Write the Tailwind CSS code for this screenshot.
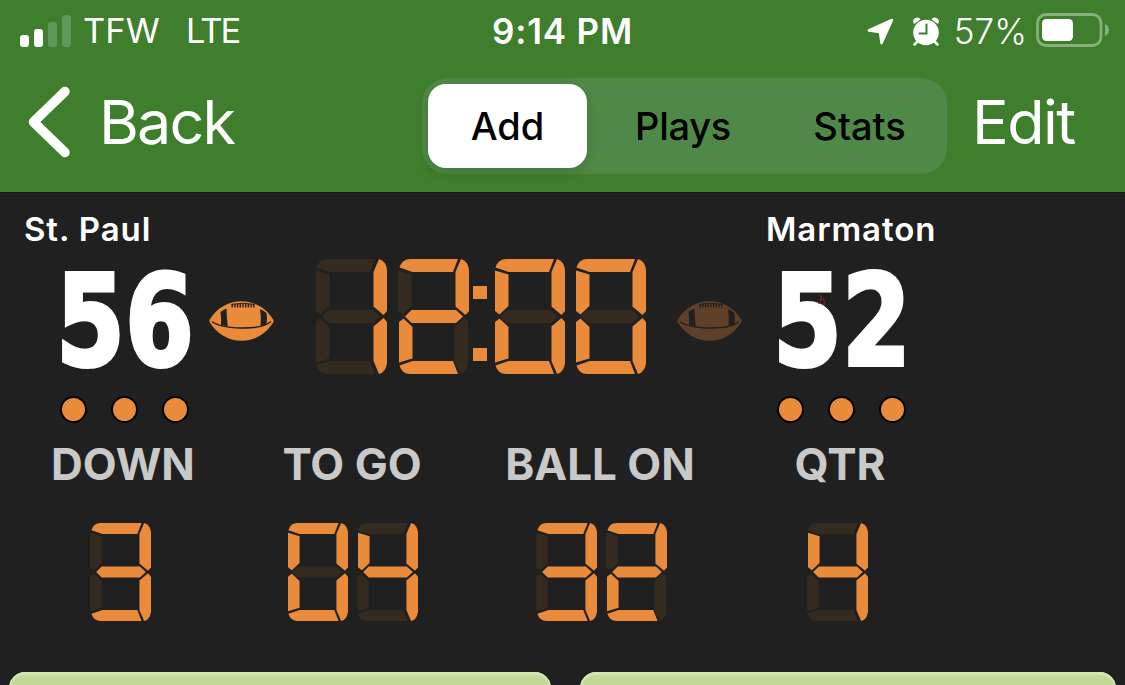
<!DOCTYPE html>
<html lang="en">
<head>
    <meta charset="UTF-8">
    <meta name="viewport" content="width=device-width, initial-scale=1.0">
    <title>Scoreboard</title>
    <script src="https://cdn.jsdelivr.net/npm/@tailwindcss/browser@4"></script>
</head>
<body class="bg-[#202020] h-[685px] overflow-hidden font-['Inter',sans-serif] text-white whitespace-nowrap">

    <!-- Shared shapes -->
    <svg class="hidden">
        <symbol id="football" viewBox="0 0 64 40">
            <path d="M.3 18.500C8 6 20 .3 32 .3s24 5.700 31.700 18.200q.6 1.500 0 3C57 32 46 39.800 32 39.800S7 32 .3 21.500q-.6-1.500 0-3z" fill="#e98b3a"/>
            <path d="M11 11Q13.500 8.800 17 7.500Q17 16 18.300 25.300L11.500 24Q12 17 11 11z" fill="#202020"/>
            <path d="M57 12Q54 9.500 50.500 8Q52 16 51 25.300L57 23.700Q58 17 57 12z" fill="#202020"/>
            <path d="M2.500 20.500Q10 26.500 32 27T61.500 20.500" fill="none" stroke="#202020" stroke-width="1.400"/>
            <path d="M22 3.300Q33 1.300 45 3.300" fill="none" stroke="#202020" stroke-width="1"/>
            <path d="M22 4.800H45" fill="none" stroke="#202020" stroke-width="3.600" stroke-dasharray="1.400 1.300"/>
        </symbol>
    </svg>

    <header class="h-[193px] bg-[#3e7e2c] border-b border-[#171717]">
        <!-- Status bar -->
        <div class="flex h-[62px] items-center pl-5 pr-[15px] text-[35px] leading-none">
            <div class="flex flex-1 items-center">
                <div class="flex h-8 w-[51px] items-end gap-[5px]">
                    <span class="h-3 w-[9px] rounded-[3px] bg-white"></span>
                    <span class="h-[18px] w-[9px] rounded-[3px] bg-white"></span>
                    <span class="h-[25px] w-[9px] rounded-[3px] bg-[#60985a]"></span>
                    <span class="h-8 w-[9px] rounded-[3px] bg-[#60985a]"></span>
                </div>
                <span class="ml-3 w-[103px] text-[34.500px]">TFW</span>
                <span class="text-[34.500px] tracking-[-2px]">LTE</span>
            </div>
            <div class="mr-[5px] text-[35px] font-semibold tracking-[0.800px]">9:14 PM</div>
            <div class="flex flex-1 items-center justify-end">
                <svg class="mr-[18px] h-[27px] w-[27px]" viewBox="0 0 27 27" fill="#fff" stroke="#fff" stroke-width="2.500" stroke-linejoin="round"><path d="M25 2L1.800 12.500l11.200 1.500 1.500 11.200z"/></svg>
                <svg class="mr-[14px] h-[29px] w-[28px]" viewBox="0 0 28 29">
                    <path d="M2 7Q-.5 2 4 .8 7-.5 8.500 2.500zM26 7Q28.500 2 24 .8 21-.5 19.500 2.500z" fill="#fff"/>
                    <path d="M6 24l-3.500 3.500M22 24l3.500 3.500" stroke="#fff" stroke-width="2.500" stroke-linecap="round"/>
                    <circle cx="14" cy="15.500" r="12.800" fill="#fff"/>
                    <path d="M14.500 7.500V16.500H7.500" fill="none" stroke="#3e7e2c" stroke-width="2" stroke-linecap="round"/>
                </svg>
                <span class="text-[35px] font-[350]">57%</span>
                <svg class="ml-[9px] mb-0.5 h-[34px] w-[74px]" viewBox="0 0 74 34">
                    <rect x="1.500" y="1.500" width="63.500" height="31" rx="8.500" fill="none" stroke="#86b17c" stroke-width="2.800"/>
                    <rect x="6" y="6" width="31" height="22" rx="4.500" fill="#fff"/>
                    <path d="M69 11q4 1.500 4 6t-4 6z" fill="#86b17c"/>
                </svg>
            </div>
        </div>

        <!-- Navigation bar -->
        <nav class="flex h-[130px] items-center pb-0.5 pl-7">
            <svg class="mb-[9px] h-[72px] w-[43px]" viewBox="0 0 43 72"><path d="M37 5.500L5.500 36l31.500 30.500" fill="none" stroke="#fff" stroke-width="9.500" stroke-linecap="round" stroke-linejoin="round"/></svg>
            <a class="mb-[7px] ml-[28px] w-[323px] text-[61px] leading-none tracking-[-1.800px]">Back</a>
            <div class="flex h-24 w-[525px] shrink-0 rounded-[26px] bg-[#508947] p-1.5 text-[38px] font-medium text-black">
                <div class="flex w-[159px] shrink-0 items-center justify-center rounded-[18px] bg-white shadow-[0_4px_12px_rgba(0,0,0,0.15)]">Add</div>
                <div class="my-4 flex w-[185px] shrink-0 items-center justify-center border-r border-[#4b8745] pl-2 tracking-[-0.300px]">Plays</div>
                <div class="flex flex-1 items-center justify-center pl-1.5">Stats</div>
            </div>
            <a class="mb-[7px] ml-[25px] text-[61px] leading-none tracking-[-1.500px]">Edit</a>
        </nav>
    </header>

    <main>
        <!-- Team names -->
        <div class="flex h-[66px] items-center pl-6 pt-[7px] text-[33px] font-semibold leading-none tracking-[0.900px]">
            <div class="w-[742px]">St. Paul</div>
            <div>Marmaton</div>
        </div>

        <!-- Score, possession and clock -->
        <div class="flex h-[115px] items-center pl-[60px]">
            <div class="h-[98px] w-[130px] pt-1"><div class="-ml-1 origin-left scale-x-[0.78] font-['DejaVu_Sans'] text-[127px] font-bold leading-[98px] [-webkit-text-stroke:4px_white]">56</div></div>
            <svg class="ml-[19px] mt-[9px] h-10 w-[65px]"><use href="#football"/></svg>
            <div class="ml-[43px] flex h-[115px] w-[330px]">
                <svg class="seg mr-[12px] h-[115px] w-[70px] shrink-0 overflow-visible" data-digit="1"></svg>
                <svg class="seg h-[115px] w-[70px] shrink-0 overflow-visible" data-digit="2"></svg>
                <div class="ml-1 mr-[8px] flex w-[14px] shrink-0 flex-col gap-[49px] pt-[27px]">
                    <span class="h-[13px] w-[14px] bg-[#e98b3a]"></span>
                    <span class="h-[13px] w-[14px] bg-[#e98b3a]"></span>
                </div>
                <svg class="seg mr-[11px] h-[115px] w-[70px] shrink-0 overflow-visible" data-digit="0"></svg>
                <svg class="seg h-[115px] w-[70px] shrink-0 overflow-visible" data-digit="0"></svg>
            </div>
            <svg class="ml-[30px] mt-[9px] h-10 w-[65px] opacity-30"><use href="#football"/></svg>
            <div class="relative ml-[35px] h-[98px] w-[130px] pt-1">
                <div class="-ml-1 origin-left scale-x-[0.78] font-['DejaVu_Sans'] text-[127px] font-bold leading-[98px] [-webkit-text-stroke:4px_white]">52</div>
                <svg class="absolute left-10 top-[26px] h-[11px] w-[10px]" viewBox="0 0 10 11"><path d="M3 1l2 3-2 3M6 5l2 3M1 9h3M6 10h3" fill="none" stroke="#74272b" stroke-width="1.500"/></svg>
            </div>
        </div>

        <!-- Timeouts left -->
        <div class="mt-[22px] flex h-[27px] pl-[60px]">
            <div class="flex w-[717px] gap-6">
                <span class="size-[27px] rounded-full border-2 border-black bg-[#e98b3a]"></span>
                <span class="size-[27px] rounded-full border-2 border-black bg-[#e98b3a]"></span>
                <span class="size-[27px] rounded-full border-2 border-black bg-[#e98b3a]"></span>
            </div>
            <div class="flex gap-6">
                <span class="size-[27px] rounded-full border-2 border-black bg-[#e98b3a]"></span>
                <span class="size-[27px] rounded-full border-2 border-black bg-[#e98b3a]"></span>
                <span class="size-[27px] rounded-full border-2 border-black bg-[#e98b3a]"></span>
            </div>
        </div>

        <!-- Game situation -->
        <div class="flex h-[82px] items-center text-center text-[44px] font-bold leading-none text-[#c9c9c9]">
            <div class="ml-[23px] w-[200px]">DOWN</div>
            <div class="ml-[29px] w-[200px]">TO GO</div>
            <div class="ml-[48px] w-[200px]">BALL ON</div>
            <div class="ml-[40px] w-[200px]">QTR</div>
        </div>
        <div class="mt-[18px] flex h-[98px]">
            <svg class="seg ml-[91px] h-[98px] w-[60px] overflow-visible" data-digit="3"></svg>
            <svg class="seg ml-[137px] h-[98px] w-[60px] overflow-visible" data-digit="0"></svg>
            <svg class="seg ml-[10px] h-[98px] w-[60px] overflow-visible" data-digit="4"></svg>
            <svg class="seg ml-[119px] h-[98px] w-[60px] overflow-visible" data-digit="3"></svg>
            <svg class="seg ml-[10px] h-[98px] w-[60px] overflow-visible" data-digit="2"></svg>
            <svg class="seg ml-[141px] h-[98px] w-[60px] overflow-visible" data-digit="4"></svg>
        </div>

        <!-- Play buttons -->
        <div class="mt-[51px] flex h-[13px] gap-[29px] overflow-hidden px-[9px]">
            <div class="h-20 w-[542px] rounded-[16px] bg-linear-to-b from-[#c5da9b] to-[#a9c678] shadow-[inset_0_3px_2px_#d5e8b4]"></div>
            <div class="h-20 w-[536px] rounded-[16px] bg-linear-to-b from-[#c5da9b] to-[#a9c678] shadow-[inset_0_3px_2px_#d5e8b4]"></div>
        </div>
    </main>

    <script>
        // One LED cell is 70x115, segments are named a-g clockwise from the top
        const SEGMENTS = {
            a: "M0.500 8.500Q3 0 11 0H59L54 13H13.500Z",
            b: "M62 0Q69 2 70 11V52L66.500 56L56.500 47.500V13Z",
            c: "M62 115Q69 113 70 104V63L66.500 59L56.500 67.500V102Z",
            d: "M0.500 106.500Q3 115 11 115H59L54 102H13.500Z",
            e: "M0 103.500L13.500 99.500V68L4.500 59.500L0 63Z",
            f: "M0 11.500L13.500 15.500V47L4.500 55.500L0 52Z",
            g: "M6 57.500L12.500 51H57L64 57.500L57 64H12.500Z"
        };
        const LIT = { 0: "abcdef", 1: "bc", 2: "abdeg", 3: "abcdg", 4: "bcfg" };

        document.querySelectorAll(".seg").forEach(cell => {
            const lit = LIT[cell.dataset.digit];
            let off = "", on = "";
            for (const name in SEGMENTS) {
                if (lit.includes(name)) on += `<path d="${SEGMENTS[name]}" fill="#e98b3a"/>`;
                else off += `<path d="${SEGMENTS[name]}" fill="#342a20"/>`;
            }
            cell.setAttribute("viewBox", "0 0 70 115");
            cell.setAttribute("preserveAspectRatio", "none");
            cell.innerHTML = `<g transform="translate(-1 0)">${off}</g>${on}`;
        });
    </script>

</body>
</html>
